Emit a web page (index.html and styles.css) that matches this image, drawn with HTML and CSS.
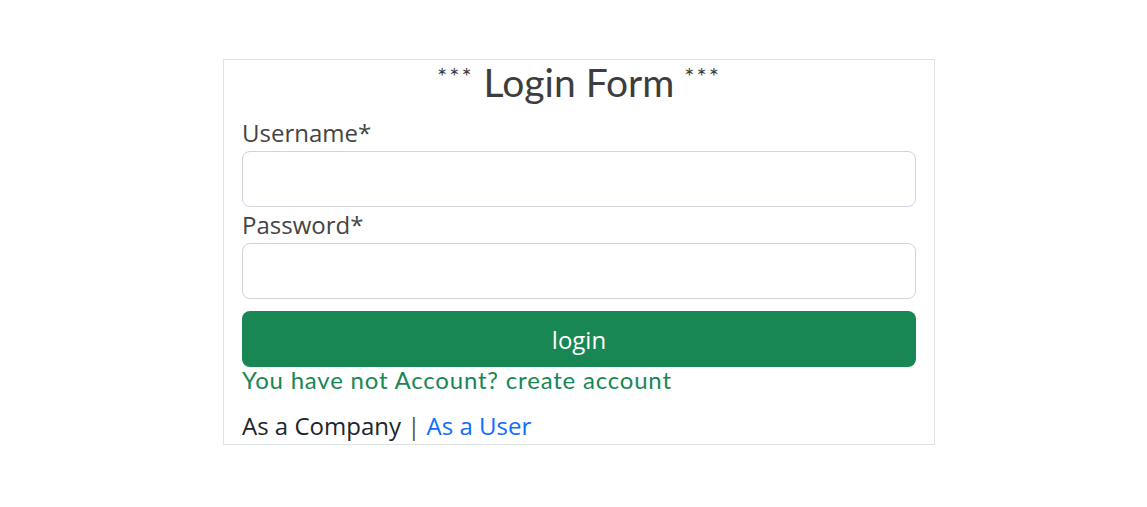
FILE: index.html
```html
<!DOCTYPE html>
<html lang="en">
<head>
<meta charset="utf-8">
<title>Login Form</title>
<link rel="stylesheet" href="styles.css">
</head>
<body>
<div class="page">
  <form class="card">
    <h1 class="title"><span class="stars">***</span> Login Form <span class="stars">***</span></h1>
    <label class="label" for="username">Username*</label>
    <input class="input" id="username" type="text">
    <label class="label" for="password">Password*</label>
    <input class="input" id="password" type="password">
    <button class="btn" type="button">login</button>
    <p class="signup">You have not Account? <a href="#" class="signup-link">create account</a></p>
    <p class="switch"><span>As a Company</span> <span class="sep">|</span> <a href="#" class="switch-link">As a User</a></p>
  </form>
</div>
</body>
</html>
```

FILE: styles.css
```css
* { box-sizing: border-box; }
html, body { margin: 0; padding: 0; background: #fff; }
body { font-family: "Open Sans", "Liberation Sans", sans-serif; color: #212529; }
.page { padding: 59px 0 0 223px; }
.card {
  width: 712px;
  border: 1px solid #dee2e6;
  padding: 0 18px 0 18px;
  display: flex;
  flex-direction: column;
}
.title {
  margin: 0 0 10px;
  font-family: "Lato", "Open Sans", sans-serif;
  font-weight: 400;
  font-size: 39px;
  line-height: 45px;
  text-align: center;
  color: #3d3d3d;
}
.stars {
  font-size: 24px;
  line-height: 0;
  letter-spacing: 2px;
  vertical-align: 12px;
}
.label {
  font-size: 24px;
  line-height: 36px;
  color: #444;
}
.input {
  height: 56px;
  border: 1px solid #ced4da;
  border-radius: 8px;
  font-size: 20px;
  padding: 0 16px;
  width: 100%;
}
.btn {
  margin-top: 12px;
  height: 56px;
  border: 0;
  border-radius: 8px;
  background: #198754;
  color: #fff;
  font-family: "Open Sans", sans-serif;
  font-size: 24px;
}
.signup {
  margin: 0 0 16px;
  font-family: "Lato", sans-serif;
  font-size: 24px;
  line-height: 25px;
  letter-spacing: 0.8px;
  color: #198754;
}
.signup-link { color: #198754; text-decoration: none; }
.switch {
  margin: 0;
  font-size: 24px;
  line-height: 36px;
  color: #212529;
}
.sep { color: #555; }
.switch-link { color: #0d6efd; text-decoration: none; }
```
